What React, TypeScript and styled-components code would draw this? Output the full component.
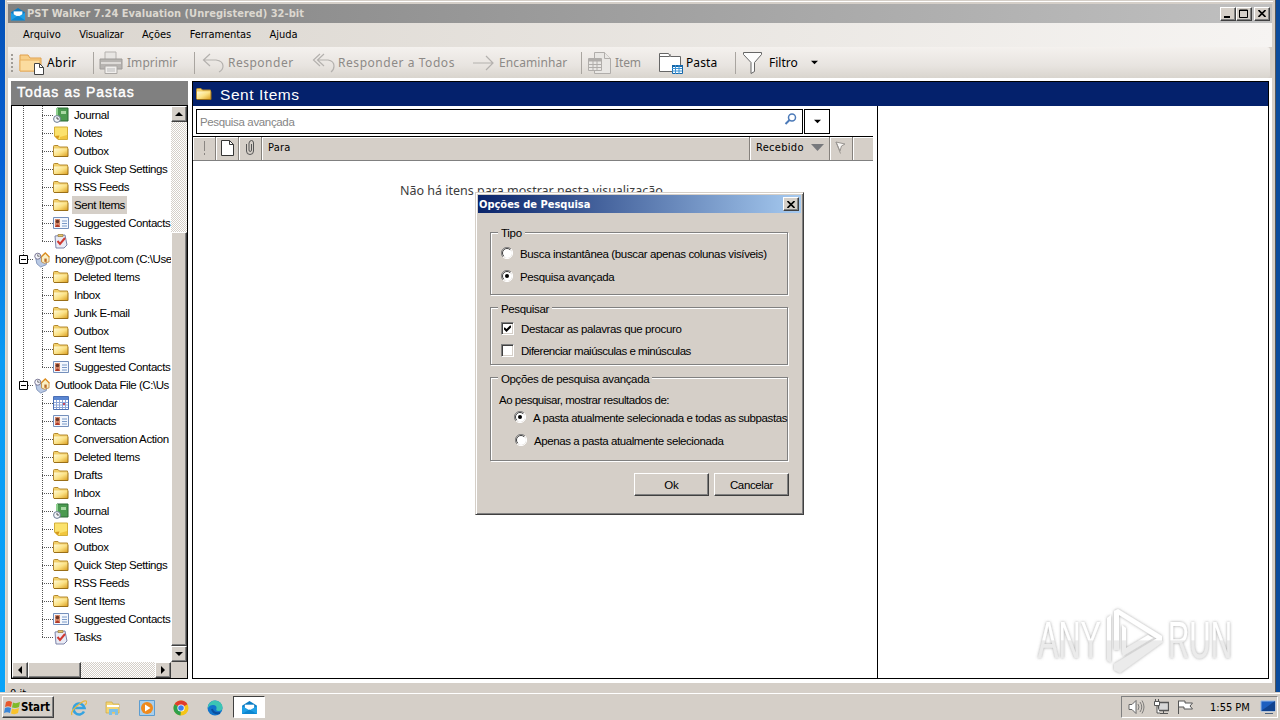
import React from 'react';
import styled, { createGlobalStyle, css } from 'styled-components';

const SANS = '"Liberation Sans", Arial, sans-serif';
const TAHOMA = '"DejaVu Sans Condensed", "DejaVu Sans", sans-serif';
const SEGOE = '"Noto Sans", "Open Sans", sans-serif';
const FACE = '#d5cfc8';

const GlobalStyle = createGlobalStyle`
  * { box-sizing: border-box; }
  body { margin: 0; overflow: hidden; }
  svg { display: block; flex: none; }
`;

const raised = css`
  background: ${FACE};
  border: 1px solid;
  border-color: #fff #404040 #404040 #fff;
  box-shadow: inset -1px -1px 0 #808080;
`;

const Text = styled.span<{ sp?: number }>`
  white-space: pre;
  letter-spacing: ${p => p.sp ?? 0}px;
`;

const Desktop = styled.div`
  position: relative;
  width: 1280px;
  height: 720px;
  overflow: hidden;
  display: flex;
  flex-direction: column;
  background: linear-gradient(90deg, transparent 50%, #0b4b9c 50%), linear-gradient(#0450b4, #0660d6 22%, #0a9bf4 50%, #09a4fa);
  font: 11.5px/18px ${SANS};
  color: #000;
`;

const Window = styled.div`
  width: 1271px;
  height: 692px;
  margin-left: 5px;
  padding: 1px 2px 0 1px;
  background: ${FACE};
  border-left: 1px solid #e2ddd0;
  border-right: 1px solid #555;
  display: flex;
  flex-direction: column;
`;

const TopEdge = styled.div`
  height: 3px;
  border-top: 1px solid #fff;
`;

const TitleBar = styled.div`
  height: 19px;
  margin: 0 1px;
  padding: 0 2px 0 3px;
  display: flex;
  align-items: center;
  gap: 2px;
  color: #dcd8d0;
  font: bold 11px/19px ${TAHOMA};
  background: linear-gradient(90deg, #808080, #c0c0c0);
`;

const WinButtons = styled.div`
  margin-left: auto;
  display: flex;
`;

const WinButton = styled.div<{ gap?: boolean }>`
  ${raised}
  width: 16px;
  height: 14px;
  margin-left: ${p => (p.gap ? 2 : 0)}px;
  display: flex;
  align-items: center;
  justify-content: center;
`;

const MenuBar = styled.div`
  height: 24px;
  margin: 0 1px;
  padding-left: 15px;
  display: flex;
  gap: 18.5px;
  font: 11px/24px ${TAHOMA};
  background: linear-gradient(90deg, #dad5ce, #f6f4f2);
`;

const ToolBar = styled.div`
  height: 31px;
  margin: 0 3px 0 1px;
  padding-left: 3px;
  display: flex;
  align-items: center;
  border-radius: 0 3px 3px 0;
  font: 12px/30px ${SEGOE};
  background: linear-gradient(#f4f1ee, #e8e4e0 60%, #d9d5ce);
`;

const Grip = styled.div`
  width: 2px;
  height: 18px;
  background: repeating-linear-gradient(#a09c96 0 2px, transparent 2px 4px);
`;

const Tool = styled.div<{ w: number; off?: boolean; gap: number; pad?: number }>`
  display: flex;
  align-items: center;
  width: ${p => p.w}px;
  gap: ${p => p.gap}px;
  padding-left: ${p => p.pad ?? 0}px;
  color: ${p => (p.off ? '#8d8a87' : '#000')};
`;

const Divider = styled.div`
  width: 1px;
  height: 22px;
  background: #a9a5a0;
`;

const Body = styled.div`
  height: 605px;
  margin: 0 1px;
  padding: 3px 3px 4px 3px;
  background: #fff;
  display: flex;
  gap: 4px;
`;

const Folders = styled.div`
  width: 177px;
  display: flex;
  flex-direction: column;
`;

const FoldersTitle = styled.div`
  height: 24px;
  padding-left: 6px;
  color: #fff;
  background: #808080;
  font: 14px/23px ${SANS};
  -webkit-text-stroke: 0.4px #fff;
`;

const TreeBox = styled.div`
  flex: 1;
  border: 1px solid #000;
  display: grid;
  grid-template: 556px 16px / 159px 16px;
`;

const Tree = styled.div`
  overflow: hidden;
  padding-left: 7px;
`;

const dotsV = 'repeating-linear-gradient(#555 0 1px, transparent 1px 2px)';
const dotsH = 'repeating-linear-gradient(90deg, #555 0 1px, transparent 1px 2px)';

const Row = styled.div`
  height: 18px;
  display: flex;
  align-items: center;

  > * { flex: none; }
`;

const Rail = styled.div<{ on?: boolean }>`
  width: 9px;
  height: 18px;
  background: ${p => (p.on ? dotsV : 'none')} 4px 0 / 1px 18px no-repeat;
`;

const Branch = styled.div<{ last?: boolean }>`
  width: 11px;
  height: 18px;
  margin-left: 14px;
  background: ${dotsV} 0 0 / 1px ${p => (p.last ? 10 : 18)}px no-repeat, ${dotsH} 0 9px / 11px 1px no-repeat;
`;

const RootDots = styled.div`
  width: 6px;
  height: 18px;
  background: ${dotsH} 0 9px / 6px 1px no-repeat;
`;

const Expander = styled.div`
  width: 9px;
  height: 18px;
  padding-top: 5px;
  background: ${dotsV} 4px 0 / 1px 5px no-repeat;
`;

const Label = styled(Text)<{ selected?: boolean }>`
  line-height: 18px;
  height: 18px;
  margin-left: 3px;
  padding: 0 2px;
  background: ${p => (p.selected ? FACE : 'none')};
`;

const checker = css`
  background: conic-gradient(#d5cfc8 25%, #fff 0 50%, #d5cfc8 0 75%, #fff 0) 0 0 / 2px 2px;
`;

const VScroll = styled.div`
  ${checker}
  display: flex;
  flex-direction: column;
`;

const HScroll = styled.div`
  ${checker}
  display: flex;
`;

const ScrollButton = styled.div`
  ${raised}
  width: 16px;
  height: 16px;
  display: flex;
  align-items: center;
  justify-content: center;
`;

const VThumb = styled.div`
  ${raised}
  height: 414px;
  margin-top: 110px;
`;

const HThumb = styled.div`
  ${raised}
  width: 53px;
  margin-right: auto;
`;

const Corner = styled.div`
  background: ${FACE};
`;

const Content = styled.div`
  width: 1077px;
  border: 1px solid #000;
  display: flex;
  flex-direction: column;
`;

const ContentTitle = styled.div`
  height: 24px;
  padding-left: 3px;
  display: flex;
  align-items: center;
  gap: 8px;
  color: #fff;
  background: #04216c;
  font: 15.5px/25px ${SANS};
`;

const Split = styled.div`
  flex: 1;
  display: flex;
`;

const List = styled.div`
  width: 685px;
  border-right: 1px solid #000;
`;

const SearchRow = styled.div`
  display: flex;
  gap: 1px;
  padding: 3px 0 2px 3px;
`;

const SearchInput = styled.div`
  width: 607px;
  height: 25px;
  border: 1px solid #000;
  padding: 0 5px 0 3px;
  display: flex;
  align-items: center;
  justify-content: space-between;
  color: #858585;
  line-height: 28px;

  svg { margin-bottom: 4px; }
`;

const SearchDrop = styled.div`
  width: 26px;
  height: 25px;
  border: 1px solid #000;
  display: flex;
  align-items: center;
  justify-content: center;
`;

const Columns = styled.div`
  width: 680px;
  height: 25px;
  display: flex;
  border-top: 1px solid #000;
  border-bottom: 1px solid #808080;
  background: ${FACE};
  font: 11px/22px ${TAHOMA};
`;

const Column = styled.div<{ w: number; pad?: number }>`
  width: ${p => p.w}px;
  padding: 0 5px 2px ${p => p.pad ?? 0}px;
  display: flex;
  align-items: center;
  justify-content: ${p => (p.pad ? 'space-between' : 'center')};
  ${p => !p.pad && 'padding-right: 0;'}
  border-right: 1px solid #85817c;
  box-shadow: inset 1px 1px 0 #fff;

  &:last-child { border-right: 0; }
`;

const Empty = styled.div`
  margin: 20px 0 0 207px;
  font: 12.5px/20px ${SEGOE};
  color: #3c3c3c;
`;

const StatusBar = styled.div`
  height: 9px;
  margin-left: 3px;
  overflow: hidden;
  font: 11px/16px ${TAHOMA};
  padding-top: 3px;
`;

const TaskBar = styled.div`
  height: 28px;
  border-top: 1px solid ${FACE};
  box-shadow: inset 0 1px 0 #fff;
  padding: 3px 2px 1px;
  display: flex;
  background: ${FACE};
`;

const StartButton = styled.div`
  ${raised}
  width: 52px;
  height: 22px;
  padding-left: 1px;
  display: flex;
  align-items: center;
  font: bold 11.5px/20px ${TAHOMA};
`;

const Launchers = styled.div`
  display: flex;
  align-items: center;
  gap: 18px;
  margin: 0 10px 0 17px;
`;

const ActiveTask = styled.div`
  width: 32px;
  height: 22px;
  border: 1px solid;
  border-color: #404040 #fff #fff #404040;
  background: #fff;
  display: flex;
  align-items: center;
  justify-content: center;
`;

const Tray = styled.div`
  width: 157px;
  height: 22px;
  margin-left: auto;
  padding: 0 1px 0 6px;
  border: 1px solid;
  border-color: #808080 #fff #fff #808080;
  display: flex;
  align-items: center;
  gap: 8px;
  font: 11px/21px ${TAHOMA};
`;

const Clock = styled(Text)`
  margin-left: 8px;
  width: 42px;
`;

const Dialog = styled.div`
  position: absolute;
  left: 475px;
  top: 192px;
  width: 329px;
  height: 323px;
  padding: 2px;
  background: ${FACE};
  border: 1px solid;
  border-color: ${FACE} #404040 #404040 ${FACE};
  box-shadow: inset 1px 1px 0 #fff, inset -1px -1px 0 #808080;
`;

const DialogTitle = styled.div`
  height: 18px;
  padding: 0 2px 0 1px;
  display: flex;
  align-items: center;
  justify-content: space-between;
  color: #fff;
  font: bold 11px/19px ${TAHOMA};
  background: linear-gradient(90deg, #0a246a, #a6caf0);
`;

const DialogBody = styled.div`
  padding: 19px 12px 0 12px;
`;

const Group = styled.div<{ h: number; top?: number }>`
  width: 298px;
  height: ${p => p.h}px;
  margin-bottom: 12px;
  padding: ${p => p.top ?? 0}px 0 0 10px;
  border: 1px solid #808080;
  box-shadow: 1px 1px 0 #fff, inset 1px 1px 0 #fff;
`;

const Legend = styled.div<{ lift: number; h?: number }>`
  display: table;
  margin: -${p => p.lift}px 0 0 -3px;
  padding: 0 3px;
  height: 16px;
  line-height: 18px;
  background: ${FACE};
`;

const Options = styled.div<{ shift: number }>`
  margin-top: ${p => p.shift}px;
`;

const Option = styled.div<{ h: number; indent?: number }>`
  height: ${p => p.h}px;
  padding-left: ${p => p.indent ?? 0}px;
  display: flex;
  align-items: center;
  gap: 7px;

  ${Text} {
    background: ${FACE};
    position: relative;
    top: 1px;
  }
`;

const Hint = styled.div`
  margin: 3px 0 0 -2px;
  height: 15px;
`;

const CheckBox = styled.div`
  width: 13px;
  height: 13px;
  background: #fff;
  border: 1px solid;
  border-color: #808080 #fff #fff #808080;
  box-shadow: inset 1px 1px 0 #404040, inset -1px -1px 0 ${FACE};
  display: flex;
  align-items: center;
  justify-content: center;
`;

const Buttons = styled.div`
  display: flex;
  justify-content: flex-end;
  gap: 5px;
`;

const PushButton = styled.div`
  ${raised}
  width: 75px;
  height: 23px;
  text-align: center;
  line-height: 22px;
`;

const Watermark = styled.svg`
  position: absolute;
  left: 1030px;
  top: 600px;
`;

const Folder = () => (
  <svg width="16" height="16" viewBox="0 0 16 16">
    <defs>
      <linearGradient id="fold" x1="0" y1="0" x2="1" y2="1">
        <stop offset="0" stopColor="#fffbd8" />
        <stop offset=".5" stopColor="#fbe184" />
        <stop offset="1" stopColor="#d99c1c" />
      </linearGradient>
    </defs>
    <path d="M.5 13V3.500q0-1 1-1h3.500l1.500 1.500h8v9z" fill="#f3d06a" stroke="#b58a30" />
    <path d="M1 13.500V5.500h14v8z" fill="url(#fold)" />
    <path d="M1 13.500h14V5.500" fill="none" stroke="#9a6f18" />
  </svg>
);

const Journal = () => (
  <svg width="16" height="16" viewBox="0 0 16 16">
    <path d="M4 1h11v13H4z" fill="#4b9a50" stroke="#2c6b34" />
    <path d="M4 1v13" stroke="#8fd08f" strokeWidth="2" />
    <path d="M8 4h5v3H8z" fill="#a9d8a4" />
    <circle cx="4" cy="12" r="3.400" fill="#f2f5fa" stroke="#6b7a90" />
    <path d="M4 10v2h2" fill="none" stroke="#333" strokeWidth=".8" />
  </svg>
);

const Notes = () => (
  <svg width="16" height="16" viewBox="0 0 16 16">
    <path d="M1.500 2h13v12.500H5L1.500 11z" fill="#fbe26c" stroke="#d3ae38" />
    <path d="M1.500 11l5-.5-1.500 4z" fill="#d79a1c" />
    <path d="M7 12l7-2v4H7z" fill="#f1c63e" />
  </svg>
);

const Card = () => (
  <svg width="16" height="16" viewBox="0 0 16 16">
    <path d="M.5 2.500h15v11H.5z" fill="#f3f7fd" stroke="#7590bc" />
    <path d="M2 4h5v8H2z" fill="#d98b6c" />
    <circle cx="4.500" cy="6.500" r="1.800" fill="#6b3626" />
    <path d="M2 12q2.500-5 5 0z" fill="#b03828" />
    <path d="M9 6h5M9 8.500h5M9 11h5" stroke="#7b9ac8" />
  </svg>
);

const Tasks = () => (
  <svg width="16" height="16" viewBox="0 0 16 16">
    <path d="M2 3l10-1 2 10-3 3H3z" fill="#e9ebf5" stroke="#7c83a8" />
    <path d="M5 3.500V1.500h5v2z" fill="#e8c66a" stroke="#95793a" strokeWidth=".7" />
    <path d="M4.500 8l2.500 3 5-6" fill="none" stroke="#d03a32" strokeWidth="2" />
  </svg>
);

const Calendar = () => (
  <svg width="16" height="16" viewBox="0 0 16 16">
    <path d="M.5 1.500h15v13H.5z" fill="#fff" stroke="#4a6fb5" />
    <path d="M1 2h14v3H1z" fill="#5a86d2" />
    <path d="M3.500 5v9M6.500 5v9M9.500 5v9M12.500 5v9M1 7.500h14M1 10h14M1 12.500h14" stroke="#8da6d8" />
    <path d="M10 8h2v2h-2z" fill="#c8485a" />
  </svg>
);

const Store = () => (
  <svg width="16" height="17" viewBox="0 0 17 17">
    <path d="M2 8l6-2 6 2-1 6-6 2.500L3 13z" fill="#b9c9e4" stroke="#6d83ad" strokeWidth=".8" />
    <path d="M8 6l4-4 4 4v5l-5 1.500L8 11z" fill="#fbf0c4" stroke="#bd7c26" strokeWidth=".8" />
    <path d="M6.500 6.500L12 1.500 16.500 6" fill="none" stroke="#dd8c1c" strokeWidth="1.300" />
    <path d="M11 7.500h2.500v3.500H11z" fill="#b96a28" />
    <circle cx="4" cy="5" r="3.200" fill="#f4f4fb" stroke="#73718f" />
    <path d="M4 3v2h2" stroke="#444" fill="none" strokeWidth=".8" />
  </svg>
);

const Envelope = ({ size }: { size: number }) => (
  <svg width={size} height={size} viewBox="0 0 16 16">
    <path d="M0 6l8-5 8 5v9H0z" fill="#0c7cc4" />
    <path d="M3 5h10v6H3z" fill="#fff" />
    <path d="M0 6.500l8 4.500 8-4.500V15H0z" fill="#1f9fe6" />
    <path d="M0 15l8-5 8 5z" fill="#0d86d0" />
  </svg>
);

const Close = () => (
  <svg width="8" height="7" viewBox="0 0 8 7">
    <path d="M.5 0l7 7M7.500 0l-7 7" stroke="#000" strokeWidth="1.600" />
  </svg>
);

type Dir = 'up' | 'down' | 'left' | 'right';
const arrows: Record<Dir, string> = {
  up: 'M0 6l4-4 4 4z',
  down: 'M0 2l4 4 4-4z',
  left: 'M6 0L2 4l4 4z',
  right: 'M2 0l4 4-4 4z',
};

const Arrow = ({ dir, size = 8 }: { dir: Dir; size?: number }) => (
  <svg width={size} height={size} viewBox="0 0 8 8">
    <path d={arrows[dir]} />
  </svg>
);

const Radio = ({ on }: { on?: boolean }) => (
  <svg width="12" height="12" viewBox="0 0 12 12">
    <circle cx="6" cy="6" r="5" fill="#fff" />
    <path d="M2 10A5.500 5.500 0 0 1 10 2" fill="none" stroke="#808080" />
    <path d="M2.800 9.200A4.500 4.500 0 0 1 9.200 2.800" fill="none" stroke="#404040" />
    <path d="M2 10A5.500 5.500 0 0 0 10 2" fill="none" stroke="#fff" />
    {on && <circle cx="6" cy="6" r="2" />}
  </svg>
);

const Reply = ({ all }: { all?: boolean }) => (
  <svg width="23" height="20" viewBox="0 0 23 20" fill="none" stroke="#b4b1ae" strokeWidth="1.200">
    {all ? (
      <path d="M8 1L1.500 7 8 13M12 1L5.500 7l6.500 6M6 7h10q6 1 6 6 0 4-3 6" />
    ) : (
      <path d="M8 1L1.500 7 8 13M2 7h12q7 1 7 6 0 4-4 6" />
    )}
  </svg>
);

const icons = { folder: Folder, journal: Journal, notes: Notes, card: Card, tasks: Tasks, calendar: Calendar };

interface Node {
  name: string;
  icon?: keyof typeof icons;
  root?: boolean;
  selected?: boolean;
}

const nodes: Node[] = [
  { name: 'Journal', icon: 'journal' },
  { name: 'Notes', icon: 'notes' },
  { name: 'Outbox' },
  { name: 'Quick Step Settings' },
  { name: 'RSS Feeds' },
  { name: 'Sent Items', selected: true },
  { name: 'Suggested Contacts', icon: 'card' },
  { name: 'Tasks', icon: 'tasks' },
  { name: 'honey@pot.com (C:\\Use', root: true },
  { name: 'Deleted Items' },
  { name: 'Inbox' },
  { name: 'Junk E-mail' },
  { name: 'Outbox' },
  { name: 'Sent Items' },
  { name: 'Suggested Contacts', icon: 'card' },
  { name: 'Outlook Data File (C:\\Us', root: true },
  { name: 'Calendar', icon: 'calendar' },
  { name: 'Contacts', icon: 'card' },
  { name: 'Conversation Action' },
  { name: 'Deleted Items' },
  { name: 'Drafts' },
  { name: 'Inbox' },
  { name: 'Journal', icon: 'journal' },
  { name: 'Notes', icon: 'notes' },
  { name: 'Outbox' },
  { name: 'Quick Step Settings' },
  { name: 'RSS Feeds' },
  { name: 'Sent Items' },
  { name: 'Suggested Contacts', icon: 'card' },
  { name: 'Tasks', icon: 'tasks' },
];

const lastRoot = nodes.map(n => !!n.root).lastIndexOf(true);

const TreeRow = ({ node, index }: { node: Node; index: number }) => {
  if (node.root) {
    return (
      <Row>
        <Expander>
          <svg width="9" height="9" viewBox="0 0 9 9">
            <path d="M.5.5h8v8h-8z" fill="#fff" stroke="#000" />
            <path d="M2 4.500h5" stroke="#000" />
          </svg>
        </Expander>
        <RootDots />
        <Store />
        <Label sp={-0.45}>{node.name}</Label>
      </Row>
    );
  }
  const Icon = icons[node.icon ?? 'folder'];
  const next = nodes[index + 1];
  return (
    <Row>
      <Rail on={index < lastRoot} />
      <Branch last={!next || next.root} />
      <Icon />
      <Label sp={-0.4} selected={node.selected}>{node.name}</Label>
    </Row>
  );
};

const App: React.FC = () => (
  <Desktop>
    <GlobalStyle />
    <Window>
      <TopEdge />
      <TitleBar>
        <Envelope size={14} />
        <Text sp={0.03}>PST Walker 7.24 Evaluation (Unregistered) 32-bit</Text>
        <WinButtons>
          <WinButton>
            <svg width="8" height="8"><path d="M0 6h6v2H0z" /></svg>
          </WinButton>
          <WinButton>
            <svg width="10" height="9"><path d="M.5 1h8v7.500h-8zM0 1.500h9" fill="none" stroke="#000" /></svg>
          </WinButton>
          <WinButton gap><Close /></WinButton>
        </WinButtons>
      </TitleBar>
      <MenuBar>
        <Text>Arquivo</Text>
        <Text sp={-0.35}>Visualizar</Text>
        <Text>Ações</Text>
        <Text sp={-0.1}>Ferramentas</Text>
        <Text>Ajuda</Text>
      </MenuBar>
      <ToolBar>
        <Grip />
        <Tool w={80} gap={2}>
          <svg width="32" height="26" viewBox="0 0 32 26">
            <path d="M7 21V5h8l2 3h11v13z" fill="#f8cf88" stroke="#e0a04c" />
            <path d="M7 21V10h20v11z" fill="#fbdc9f" stroke="#e8b060" />
            <path d="M21.500 13.500h5l4 4v7h-9z" fill="#fff" stroke="#444" />
            <path d="M26.500 13.500v4h4" fill="none" stroke="#444" />
          </svg>
          <Text sp={0.3}>Abrir</Text>
        </Tool>
        <Divider />
        <Tool w={100} gap={4} off>
          <svg width="29" height="24" viewBox="0 0 29 24">
            <path d="M11 9V1h11v8" fill="#e8e6e3" stroke="#b5b2af" />
            <path d="M6 8h22v10H6z" fill="#b7b4b1" stroke="#9e9b98" />
            <path d="M7 12h20" stroke="#dedbd8" strokeWidth="2" />
            <path d="M11 15h12v7.500H11z" fill="#f0eeec" stroke="#aaa7a4" />
            <path d="M13 18h8M13 20h8" stroke="#bbb" />
          </svg>
          <Text sp={0.05}>Imprimir</Text>
        </Tool>
        <Divider />
        <Tool w={117} gap={3} pad={7} off>
          <Reply />
          <Text sp={0.5}>Responder</Text>
        </Tool>
        <Tool w={161} gap={3} off>
          <Reply all />
          <Text sp={0.55}>Responder a Todos</Text>
        </Tool>
        <Tool w={108} gap={5} off>
          <svg width="21" height="16" viewBox="0 0 21 16" fill="none" stroke="#b4b1ae" strokeWidth="1.200">
            <path d="M0 8h20M13 1l7 7-7 7" />
          </svg>
          <Text sp={0.1}>Encaminhar</Text>
        </Tool>
        <Divider />
        <Tool w={77} gap={4} pad={6} off>
          <svg width="23" height="24" viewBox="0 0 23 24" fill="#e9e7e4" stroke="#b0adaa">
            <path d="M6.500 1.500h10l6 6v15h-16z" />
            <path d="M16.500 1.500v6h6" />
            <path d="M.5 7.500h13v12H.5z" />
            <path d="M1 9h12" strokeWidth="3" />
            <path d="M1 13.500h12M1 16.500h12M5 8v11M9 8v11" />
          </svg>
          <Text sp={-0.1}>Item</Text>
        </Tool>
        <Tool w={76} gap={3}>
          <svg width="24" height="24" viewBox="0 0 24 24">
            <path d="M.5 20.500v-18h9l2 3h10v15z" fill="#fff" stroke="#666" />
            <path d="M.5 5.500h10l1-2" fill="none" stroke="#666" />
            <path d="M13.500 14.500h10v8h-10z" fill="#fff" stroke="#1566a8" />
            <path d="M13 15h11" stroke="#1566a8" strokeWidth="2" />
            <path d="M13 17.500h10M13 20h10M16.500 14v9M20 14v9" stroke="#3b93d6" />
          </svg>
          <Text sp={0.1}>Pasta</Text>
        </Tool>
        <Divider />
        <Tool w={100} gap={6} pad={7}>
          <svg width="20" height="24" viewBox="0 0 20 24">
            <path d="M.5 1.500h18v2l-7 8v9l-3.500 2v-11l-7.500-8z" fill="#fcfcfc" stroke="#666" />
          </svg>
          <Text>Filtro</Text>
          <Tool w={10} gap={0} pad={7}><Arrow dir="down" size={7} /></Tool>
        </Tool>
      </ToolBar>
      <Body>
        <Folders>
          <FoldersTitle><Text sp={1}>Todas as Pastas</Text></FoldersTitle>
          <TreeBox>
            <Tree>
              {nodes.map((node, i) => <TreeRow key={i} node={node} index={i} />)}
            </Tree>
            <VScroll>
              <ScrollButton><Arrow dir="up" /></ScrollButton>
              <VThumb />
              <ScrollButton><Arrow dir="down" /></ScrollButton>
            </VScroll>
            <HScroll>
              <ScrollButton><Arrow dir="left" /></ScrollButton>
              <HThumb />
              <ScrollButton><Arrow dir="right" /></ScrollButton>
            </HScroll>
            <Corner />
          </TreeBox>
        </Folders>
        <Content>
          <ContentTitle>
            <Folder />
            <Text sp={0.55}>Sent Items</Text>
          </ContentTitle>
          <Split>
            <List>
              <SearchRow>
                <SearchInput>
                  <Text sp={-0.35}>Pesquisa avançada</Text>
                  <svg width="13" height="13" viewBox="0 0 13 13" fill="none" stroke="#4c7ab8">
                    <circle cx="8" cy="4.500" r="3.500" strokeWidth="1.500" />
                    <path d="M5.500 7L1.500 11" strokeWidth="2" />
                  </svg>
                </SearchInput>
                <SearchDrop><Arrow dir="down" size={7} /></SearchDrop>
              </SearchRow>
              <Columns>
                <Column w={23}>
                  <svg width="3" height="14"><path d="M1.500 0v10M1.500 12v2" stroke="#8a8682" /></svg>
                </Column>
                <Column w={23}>
                  <svg width="13" height="16" viewBox="0 0 13 16">
                    <path d="M.5.5h8l4 4v11H.5z" fill="#fff" stroke="#333" />
                    <path d="M8.500.5v4h4" fill="none" stroke="#333" />
                  </svg>
                </Column>
                <Column w={23}>
                  <svg width="9" height="15" viewBox="0 0 9 15" fill="none" stroke="#555">
                    <path d="M.5 4v7q0 3.500 3.500 3.500T7.500 11V3q0-2.500-2-2.500T3 3v7q0 1.500 1.200 1.500T5.500 10V4" />
                  </svg>
                </Column>
                <Column w={488} pad={6}><Text sp={0.2}>Para</Text></Column>
                <Column w={80} pad={6}>
                  <Text sp={0.3}>Recebido</Text>
                  <svg width="13" height="7"><path d="M0 0h13L6.500 7z" fill="#77797c" /></svg>
                </Column>
                <Column w={23}>
                  <svg width="12" height="13" viewBox="0 0 12 13">
                    <path d="M1 1l9 2-3.500 2L5 10z" fill="#f8f6f4" stroke="#9a9692" />
                    <path d="M1 1l4.500 11.500" stroke="#9a9692" />
                  </svg>
                </Column>
                <Column w={20} />
              </Columns>
              <Empty><Text>Não há itens para mostrar nesta visualização.</Text></Empty>
            </List>
          </Split>
        </Content>
      </Body>
      <StatusBar><Text>0 it</Text></StatusBar>
    </Window>
    <TaskBar>
      <StartButton>
        <svg width="17" height="17" viewBox="0 0 17 17">
          <path d="M2 3q3-2 6 0L7 8Q4 6.500 1 8z" fill="#e8582c" />
          <path d="M9 3.500q3 1.500 7-.5L15 8q-3 1.500-7 .5z" fill="#7fba28" />
          <path d="M1 9q3-1.500 6 0l-1 5q-3-1.500-6 0z" fill="#3a86d8" />
          <path d="M8 9.500q3 1.500 7-.5l-1 5q-3 2-7 .5z" fill="#f9c22c" />
        </svg>
        <Text sp={-0.15}>Start</Text>
      </StartButton>
      <Launchers>
        <svg width="16" height="16" viewBox="0 0 16 16" fill="none">
          <path d="M13 11.500A5.500 5.500 0 1 1 13.500 8H4" stroke="#35a3e0" strokeWidth="2.600" />
          <path d="M1 15Q-1 12 6 6T15 1t-1 4" stroke="#e9b83c" strokeWidth="1.200" />
        </svg>
        <svg width="16" height="16" viewBox="0 0 16 16">
          <path d="M1 2h6l1 2h6v9H1z" fill="#f3d574" stroke="#cda944" strokeWidth=".7" />
          <path d="M2 5h12v2H2z" fill="#fff" />
          <path d="M4 15V9h9v6h-3v-3H7v3z" fill="#7cc0e8" />
        </svg>
        <svg width="16" height="16" viewBox="0 0 16 16">
          <path d="M.5.5h15v15H.5z" fill="#a9cfec" stroke="#5d9dd0" />
          <circle cx="8" cy="8" r="6" fill="#f08a1c" />
          <path d="M6 4.500l5.500 3.500L6 11.500z" fill="#fff" />
        </svg>
        <svg width="16" height="16" viewBox="0 0 16 16">
          <circle cx="8" cy="8" r="7.500" fill="#f5c518" />
          <path d="M8 8L1.500 4.200A7.500 7.500 0 0 1 14.500 4.200z" fill="#e03c2e" />
          <path d="M8 8L1.500 4.200A7.500 7.500 0 0 0 7.500 15.500z" fill="#2ea04c" />
          <circle cx="8" cy="8" r="3.600" fill="#fff" />
          <circle cx="8" cy="8" r="2.800" fill="#3e7ff0" />
        </svg>
        <svg width="16" height="16" viewBox="0 0 16 16">
          <circle cx="8" cy="8" r="7.500" fill="#1274cc" />
          <path d="M1 6Q3 .5 8 .5q7 .5 7.500 7 0 3.500-4 3.500-3 0-2-2.500Q10 5 6 5 2.500 5 1 8z" fill="#3cc5b4" />
          <path d="M5 9q1 5 8 4" fill="none" stroke="#0b4f9e" strokeWidth="2" />
        </svg>
      </Launchers>
      <ActiveTask><Envelope size={15} /></ActiveTask>
      <Tray>
        <svg width="17" height="16" viewBox="0 0 17 16" fill="none" stroke="#666">
          <path d="M1 5.500h3l4-4v13l-4-4H1z" fill="#fff" />
          <path d="M10 5q2 3 0 6M12 3q3.500 5 0 10M14 1.500q4 6.500 0 13" strokeWidth=".8" />
        </svg>
        <svg width="16" height="16" viewBox="0 0 16 16" fill="#fff" stroke="#555">
          <path d="M5.500 3.500h10v8h-10z" fill="#d8d8d8" strokeWidth="1.300" />
          <path d="M7 14.500h8M10.500 12v2" />
          <path d="M1.500 2.500h5v4h-5zM2.500 0v2M5.500 0v2M4 7v7h3" />
        </svg>
        <svg width="17" height="16" viewBox="0 0 17 16" fill="#fff" stroke="#555">
          <path d="M1.500 15V1.500M2 2h6v2h7.500l-2.500 3 2.500 3H7V8H2" />
        </svg>
        <Clock sp={0}>1:55 PM</Clock>
        <svg width="16" height="15" viewBox="0 0 16 15">
          <path d="M1 1h14v10H1z" fill="#1c5fc0" stroke="#8fb6e8" />
          <path d="M1 11L15 1v10z" fill="#10438f" />
          <path d="M5 13.500h8" stroke="#49607e" />
        </svg>
      </Tray>
    </TaskBar>
    <Dialog>
      <DialogTitle>
        <Text>Opções de Pesquisa</Text>
        <WinButton><Close /></WinButton>
      </DialogTitle>
      <DialogBody>
        <Group h={63}>
          <Legend lift={9}><Text sp={-0.3}>Tipo</Text></Legend>
          <Options shift={-1}>
            <Option h={23}><Radio /><Text sp={-0.36}>Busca instantânea (buscar apenas colunas visíveis)</Text></Option>
            <Option h={23}><Radio on /><Text sp={-0.36}>Pesquisa avançada</Text></Option>
          </Options>
        </Group>
        <Group h={58} top={1}>
          <Legend lift={9}><Text sp={-0.36}>Pesquisar</Text></Legend>
          <Options shift={-1}>
            <Option h={22}>
              <CheckBox>
                <svg width="7" height="7"><path d="M0 3l2.500 2.500L7 1" fill="none" stroke="#000" strokeWidth="2" /></svg>
              </CheckBox>
              <Text sp={-0.38}>Destacar as palavras que procuro</Text>
            </Option>
            <Option h={22}><CheckBox /><Text sp={-0.48}>Diferenciar maiúsculas e minúsculas</Text></Option>
          </Options>
        </Group>
        <Group h={84}>
          <Legend lift={8}><Text sp={-0.36}>Opções de pesquisa avançada</Text></Legend>
          <Hint><Text sp={-0.48}>Ao pesquisar, mostrar resultados de:</Text></Hint>
          <Options shift={0}>
            <Option h={21} indent={13}><Radio on /><Text sp={-0.41}>A pasta atualmente selecionada e todas as subpastas</Text></Option>
            <Option h={25} indent={14}><Radio /><Text sp={-0.41}>Apenas a pasta atualmente selecionada</Text></Option>
          </Options>
        </Group>
        <Buttons>
          <PushButton><Text sp={-0.2}>Ok</Text></PushButton>
          <PushButton><Text sp={-0.35}>Cancelar</Text></PushButton>
        </Buttons>
      </DialogBody>
    </Dialog>
    <Watermark width="220" height="80" viewBox="0 0 220 80">
      <defs>
        <linearGradient id="mark" gradientUnits="userSpaceOnUse" x1="0" y1="20" x2="0" y2="60">
          <stop offset=".5" stopColor="#fff" />
          <stop offset=".52" stopColor="#ebebeb" />
        </linearGradient>
        <filter id="soft" x="-20%" y="-20%" width="140%" height="140%">
          <feDropShadow dx="0" dy="0" stdDeviation="1.500" floodColor="#707070" floodOpacity=".65" />
        </filter>
      </defs>
      <g fill="url(#mark)" filter="url(#soft)" fontFamily="Liberation Sans" fontSize="51">
        <text x="8" y="58" textLength="63" lengthAdjust="spacingAndGlyphs">ANY</text>
        <text x="138" y="58" textLength="64" lengthAdjust="spacingAndGlyphs">RUN</text>
        <path d="M84 50V11l4-2 44 27v6L89 15v35z" />
        <path d="M77 18l4-3v48l-4-3zM92 52V25l4 3v20l22-13 5 3-30 18z" />
        <path d="M84 64l45-27 4 5-43 31-6-3z" />
      </g>
    </Watermark>
  </Desktop>
);

export default App;
